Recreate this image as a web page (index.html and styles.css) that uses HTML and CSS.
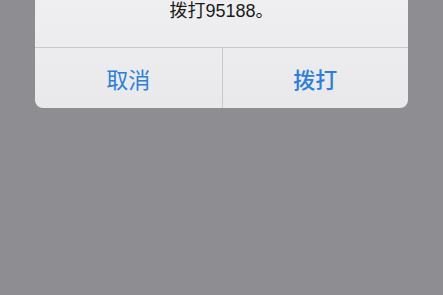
FILE: index.html
```html
<!DOCTYPE html>
<html lang="zh-CN">
<head>
<meta charset="utf-8">
<title>拨打</title>
<link rel="stylesheet" href="styles.css">
</head>
<body>
<div class="alert">
  <div class="message">拨打95188。</div>
  <div class="actions">
    <div class="action">取消</div>
    <div class="action primary">拨打</div>
  </div>
</div>
</body>
</html>
```
FILE: styles.css
```css
html, body {
  margin: 0;
  padding: 0;
  background: #8e8d92;
  height: 100%;
}
body {
  font-family: "Noto Sans CJK SC", "Noto Sans", sans-serif;
}
.alert {
  margin-left: 35px;
  width: 373px;
  background: linear-gradient(#efeff1, #e9e9eb);
  border-radius: 0 0 8px 8px;
  overflow: hidden;
}
.message {
  height: 48px;
  box-sizing: border-box;
  padding-top: 0;
  font-family: "Liberation Sans", "Noto Sans CJK SC", sans-serif;
  font-size: 18px;
  line-height: 22px;
  margin-top: -1px;
  color: #1b1b1b;
  text-align: center;
  border-bottom: 1px solid #c9c9cd;
}
.alert {
  padding-top: 1px;
}
.actions {
  display: grid;
  grid-template-columns: 1fr 1fr;
  height: 60px;
}
.action {
  display: flex;
  align-items: center;
  justify-content: center;
  font-size: 22px;
  color: #2d7fda;
  padding-bottom: 1px;
}
.action + .action {
  border-left: 1px solid #c9c9cd;
}
.primary {
  font-weight: 500;
}
```
